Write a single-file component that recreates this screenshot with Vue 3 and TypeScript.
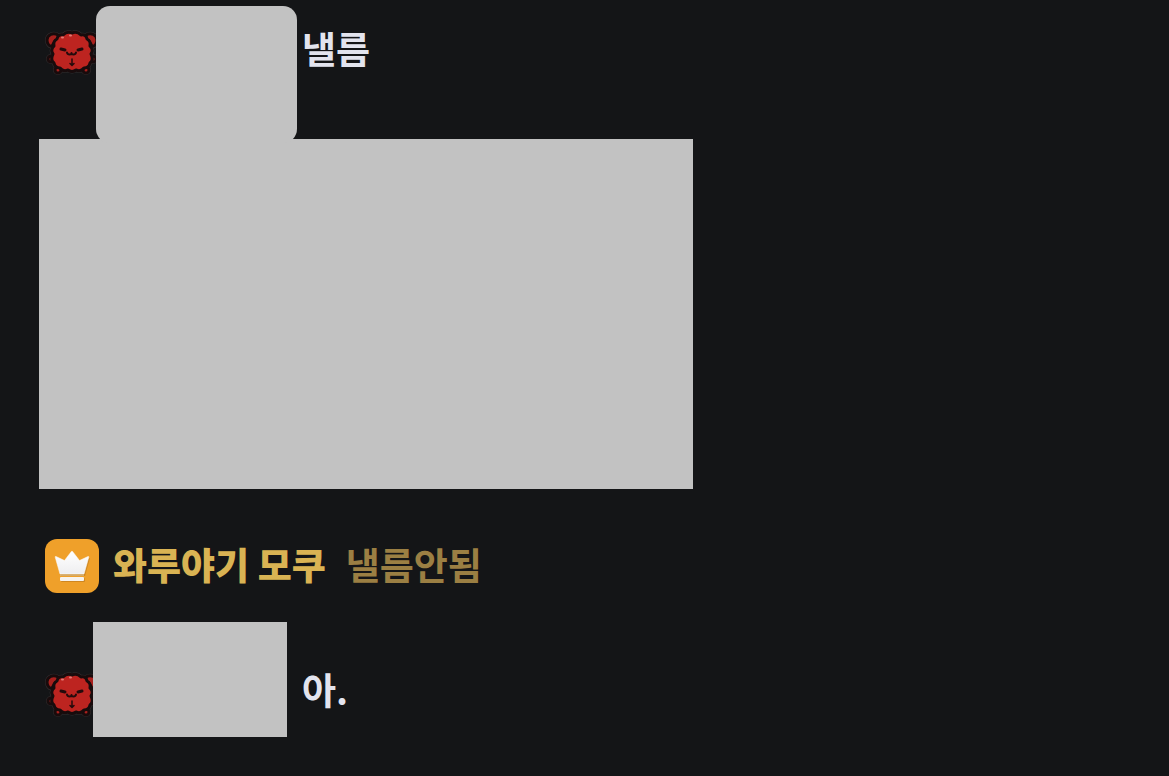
<script setup lang="ts">
interface Message {
  id: number
  kind: 'fan' | 'host'
  name?: string
  text: string
  plate?: 'tall' | 'short'
  media?: boolean
}

const messages: Message[] = [
  { id: 1, kind: 'fan', text: '낼름', plate: 'tall', media: true },
  { id: 2, kind: 'host', name: '와루야기 모쿠', text: '낼름안됨' },
  { id: 3, kind: 'fan', text: '아.', plate: 'short' },
]

const fleece =
  'M12 10Q13 5 18 6Q22 2 27 4Q32 2 36 6Q41 5 42 10Q46 12 45 17Q49 21 46 25Q49 31 45 34Q44 39 39 39Q36 43 31 41Q27 44 23 41Q18 43 15 39Q10 39 9 34Q5 31 8 25Q5 21 9 17Q8 12 12 10Z'
const ears =
  'M13 6C8 3 2 6 2 11C2 14 4 18 7 17L10 12M41 6C46 3 52 6 52 11C52 14 50 18 47 17L44 12'
</script>

<template>
  <main class="chat">
    <article v-for="m in messages" :key="m.id" class="message">
      <div class="line" :class="[m.kind, m.plate]">
        <svg v-if="m.kind === 'fan'" class="sheep" viewBox="0 0 54 48" aria-hidden="true">
          <g stroke-linejoin="round" stroke-linecap="round">
            <g fill="#180b0c" stroke="#333031" stroke-width="4">
              <path :d="ears" />
              <path :d="fleece" />
              <circle cx="6" cy="30" r="3" /><circle cx="48" cy="30" r="3" />
              <circle cx="13" cy="41" r="3" /><circle cx="41" cy="41" r="3" />
            </g>
            <g fill="#a8201d" stroke="#180b0c" stroke-width="3">
              <path :d="ears" />
              <circle cx="6" cy="30" r="3" /><circle cx="48" cy="30" r="3" />
              <circle cx="13" cy="41" r="3" /><circle cx="41" cy="41" r="3" />
              <path :d="fleece" fill="#bd2420" />
            </g>
            <g fill="none" stroke="#240b0c" stroke-width="2">
              <path d="M16 20L20 21M37 20L33 21" stroke-width="3" />
              <path d="M22 23.500Q22.500 25.500 24.500 25.500Q26.500 25.500 26.500 24Q26.500 25.500 28.500 25.500Q30.500 25.500 31 23.500" />
              <path d="M27 30V36M25 34.500L27 36.500L29 34.500" stroke-width="1.500" />
            </g>
            <path d="M17 8.500h1M25 6.500h1" stroke="#e27a74" stroke-width="2" />
          </g>
        </svg>
        <svg v-else class="crown" viewBox="0 0 54 54" aria-hidden="true">
          <defs>
            <linearGradient id="crownFill" x1="0" y1="0" x2="0" y2="1">
              <stop offset="0" stop-color="#fff" />
              <stop offset="1" stop-color="#eeeef0" />
            </linearGradient>
          </defs>
          <rect width="54" height="54" rx="12" fill="#efa02a" />
          <g fill="#a96b18" opacity=".45" transform="translate(1 1)">
            <path d="M10 18L20 23L27 12L34 23L44 18L39 36H15Z" />
            <rect x="15" y="38" width="24" height="4" rx="1" />
          </g>
          <path d="M11 17.500Q10 17 10.300 18.500L15 35H39L43.700 18.500Q44 17 43 17.500L34.500 21.500L27.600 12.500Q27 11.800 26.400 12.500L19.500 21.500Z" fill="url(#crownFill)" stroke="#fff" stroke-width=".5" />
          <path d="M15 36H39" stroke="#d9b67d" stroke-width="1.500" />
          <rect x="15" y="38" width="24" height="4" rx="1" fill="#f7f3ee" />
        </svg>
        <div v-if="m.plate" class="plate"></div>
        <strong v-if="m.name" class="name">{{ m.name }}</strong>
        <span class="text">{{ m.text }}</span>
      </div>
      <div v-if="m.media" class="media"></div>
    </article>
  </main>
</template>

<style>
body {
  margin: 0;
  background: #141517;
}
</style>

<style scoped>
.chat {
  box-sizing: border-box;
  min-height: 100vh;
  padding: 6px 39px 38px;
  background: #141517;
  font-family: "Noto Sans CJK KR", "Noto Sans", sans-serif;
  font-size: 37px;
  font-weight: 700;
  line-height: 50px;
  color: #e3e4ee;
}
.line {
  display: flex;
  padding-left: 6px;
}
.sheep {
  flex: none;
  width: 54px;
  height: 48px;
}
.plate {
  flex: none;
  background: #c2c2c2;
}
.tall .sheep {
  margin-top: 23px;
}
.tall .plate {
  width: 201px;
  height: 137px;
  margin: 0 5px -4px -3px;
  border-radius: 14px;
}
.tall .text {
  margin-top: 17px;
}
.media {
  max-width: 654px;
  height: 350px;
  background: #c2c2c2;
}
.host {
  align-items: flex-start;
  margin: 50px 0 29px;
}
.crown {
  flex: none;
  width: 54px;
  height: 54px;
}
.name {
  margin: 0 20px 0 14px;
  color: #d9b353;
}
.host .text {
  color: #9b7f43;
}
.short .sheep {
  margin-top: 49px;
}
.short .plate {
  width: 194px;
  height: 115px;
  margin: 0 15px 0 -6px;
}
.short .text {
  margin-top: 42px;
}
</style>
